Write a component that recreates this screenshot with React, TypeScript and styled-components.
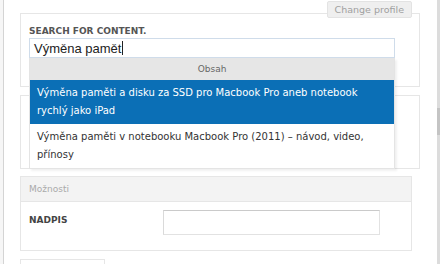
import React from "react";
import styled, { createGlobalStyle } from "styled-components";

const GlobalStyle = createGlobalStyle`
  html, body { margin: 0; padding: 0; background: #fff; overflow: hidden; }
  body { font-family: "DejaVu Sans", Verdana, sans-serif; }
  * { box-sizing: border-box; }
`;

const Page = styled.div`
  display: flex;
  width: 440px;
  height: 264px;
  overflow: hidden;
`;

const LeftStrip = styled.div`
  width: 4px;
  flex: none;
  background: #f6f6f6;
  border-right: 1px solid #d4d4d4;
`;

const Main = styled.div`
  flex: 1;
  padding: 13px 0 0 16px;
  display: flex;
  flex-direction: column;
`;

const ScrollTrack = styled.div`
  width: 3px;
  flex: none;
  margin-right: 0;
  background: #dcdcdc;
  position: relative;
`;

const ScrollThumb = styled.div`
  position: absolute;
  left: 0;
  right: 0;
  top: 108px;
  height: 27px;
  background: #c4c4c4;
`;

const Panel = styled.div<{ $w: number; $h?: number; $gap?: number }>`
  position: relative;
  width: ${(p) => p.$w}px;
  ${(p) => (p.$h ? `height: ${p.$h}px;` : "")}
  margin-top: ${(p) => p.$gap ?? 0}px;
  border: 1px solid #e6e6e6;
  background: #fff;
  flex: none;
`;

const ProfileButton = styled.div`
  position: absolute;
  top: -13px;
  right: 7px;
  height: 17px;
  padding: 0 7px;
  background: #efefef;
  border: 1px solid #e3e3e3;
  border-radius: 2px;
  color: #a0a0a0;
  font-size: 9.5px;
  line-height: 15px;
  z-index: 2;
`;

const SearchBody = styled.div`
  padding: 11px 0 0 8px;
`;

const Label = styled.div`
  font-weight: bold;
  font-size: 9px;
  line-height: 12px;
  color: #555;
  text-transform: uppercase;
`;

const SearchWrap = styled.div`
  position: relative;
  width: 366px;
  margin-top: 1px;
`;

const SearchInput = styled.div`
  height: 20px;
  border: 1px solid #cfdcea;
  background: #fff;
  padding: 0 4px;
  display: flex;
  align-items: center;
  font-family: "Liberation Sans", Arial, sans-serif;
  font-size: 13px;
  color: #222;
`;

const Caret = styled.span`
  display: inline-block;
  width: 1px;
  height: 14px;
  background: #222;
  margin-left: 1px;
`;

const Dropdown = styled.div`
  position: absolute;
  top: 100%;
  left: 0;
  right: 0;
  background: #fff;
  border: 1px solid #e4e4e4;
  border-top: none;
  box-shadow: 2px 2px 2px rgba(0, 0, 0, 0.06);
  z-index: 3;
`;

const DropHeader = styled.div`
  height: 22px;
  background: #e6e6e6;
  color: #666;
  font-size: 9px;
  line-height: 22px;
  text-align: center;
`;

const Item = styled.div<{ $active?: boolean }>`
  padding: 4px 7px;
  height: 44px;
  font-size: 10px;
  line-height: 18px;
  background: ${(p) => (p.$active ? "#0b6fb6" : "#fff")};
  color: ${(p) => (p.$active ? "#fff" : "#333")};
`;

const PanelHeader = styled.div`
  height: 25px;
  background: #f3f3f3;
  border-bottom: 1px solid #e6e6e6;
  color: #aaa;
  font-size: 9px;
  line-height: 24px;
  padding-left: 8px;
`;

const FieldRow = styled.div`
  display: flex;
  align-items: center;
  padding: 8px 0 15px 8px;
`;

const FieldLabel = styled(Label)`
  width: 134px;
  color: #444;
  margin-top: -6px;
`;

const TextInput = styled.div`
  width: 217px;
  height: 25px;
  border: 1px solid #e2e2e2;
  border-top-color: #cacaca;
  border-left-color: #dadada;
  background: #fff;
`;

const BottomBox = styled.div`
  width: 85px;
  height: 20px;
  margin-top: 8px;
  border: 1px solid #e6e6e6;
  flex: none;
`;

export default function App() {
  return (
    <>
      <GlobalStyle />
      <Page>
        <LeftStrip />
        <Main>
          <Panel $w={400} $h={74}>
            <ProfileButton>Change profile</ProfileButton>
            <SearchBody>
              <Label>Search for content.</Label>
              <SearchWrap>
                <SearchInput>
                  Výměna pamět
                  <Caret />
                </SearchInput>
                <Dropdown>
                  <DropHeader>Obsah</DropHeader>
                  <Item $active>
                    Výměna paměti a disku za SSD pro Macbook Pro aneb notebook rychlý jako iPad
                  </Item>
                  <Item>
                    Výměna paměti v notebooku Macbook Pro (2011) – návod, video, přínosy
                  </Item>
                </Dropdown>
              </SearchWrap>
            </SearchBody>
          </Panel>
          <Panel $w={400} $h={74} $gap={8} />
          <Panel $w={392} $gap={7}>
            <PanelHeader>Možnosti</PanelHeader>
            <FieldRow>
              <FieldLabel>Nadpis</FieldLabel>
              <TextInput />
            </FieldRow>
          </Panel>
          <BottomBox />
        </Main>
        <ScrollTrack>
          <ScrollThumb />
        </ScrollTrack>
      </Page>
    </>
  );
}
